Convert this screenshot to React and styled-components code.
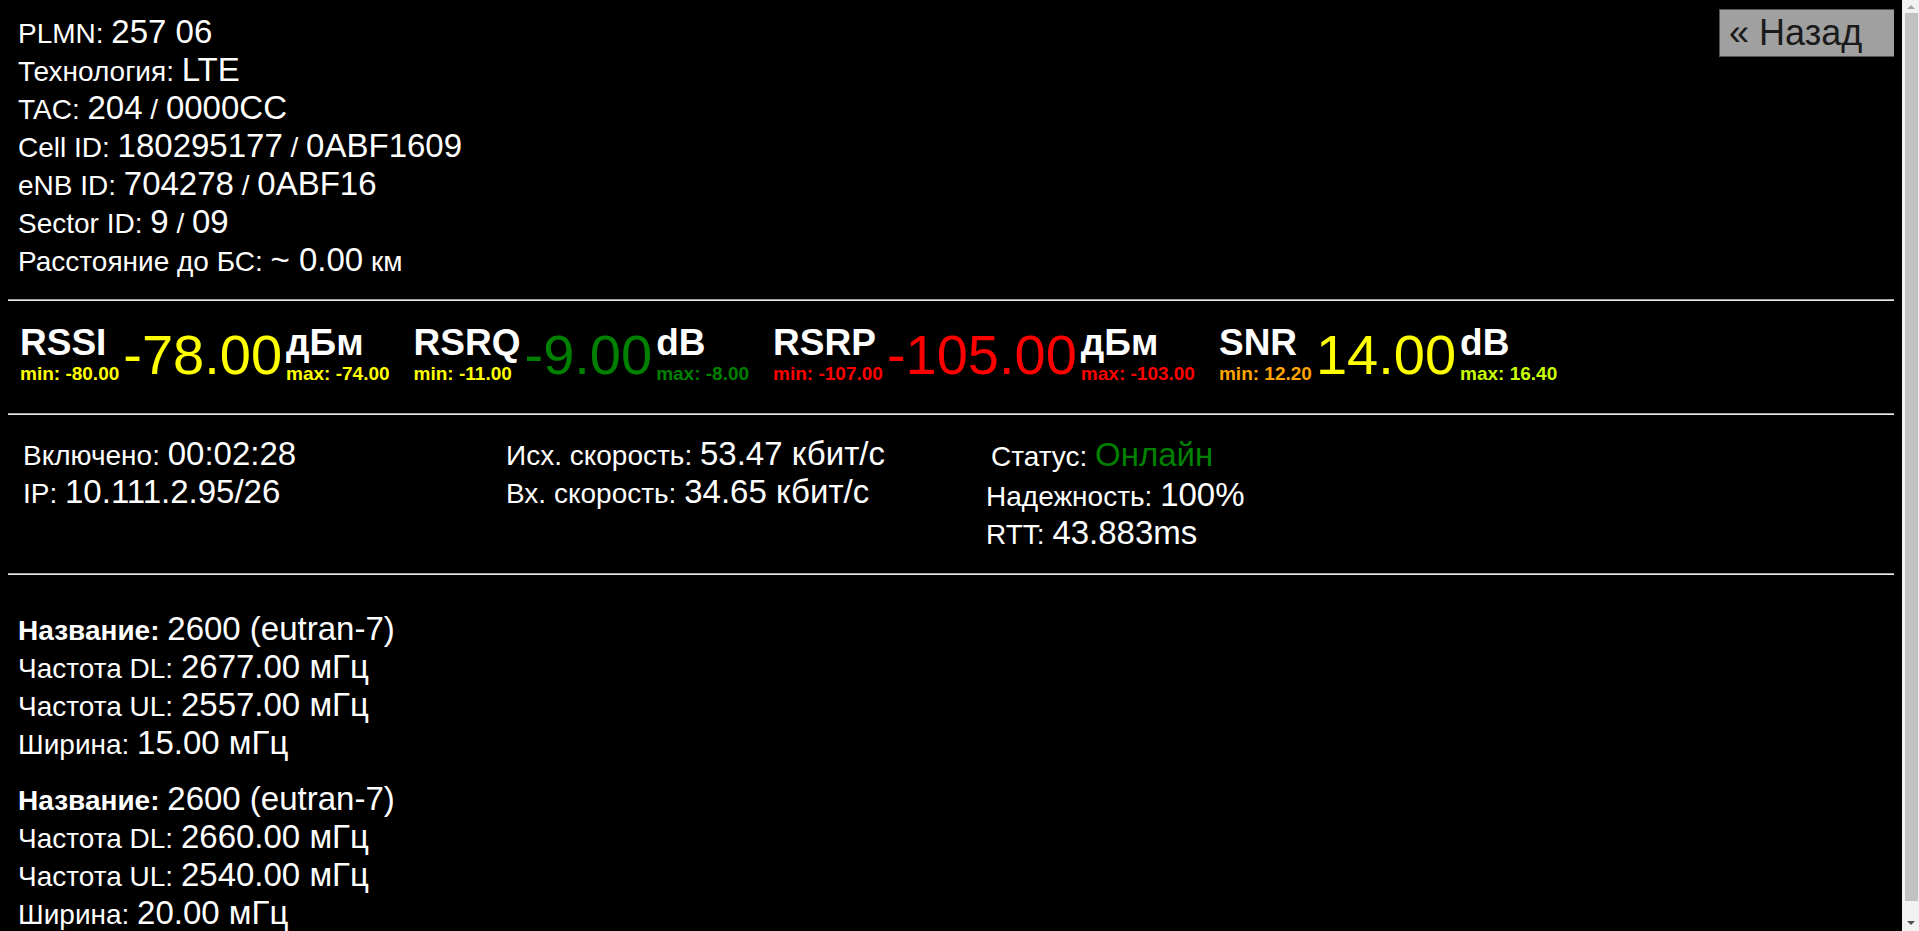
import React from "react";
import styled, { createGlobalStyle } from "styled-components";

const GlobalStyle = createGlobalStyle`
  html {
    background: #000;
  }
  body {
    margin: 8px 25px 8px 8px;
    background: #000;
    color: #fff;
    font-family: "Liberation Sans", Arial, sans-serif;
  }
`;

const metrics = [
  {
    name: "RSSI",
    value: "-78.00",
    unit: "дБм",
    min: "-80.00",
    max: "-74.00",
    color: "#ffff00",
    minColor: "#ffff00",
    maxColor: "#ffff00",
  },
  {
    name: "RSRQ",
    value: "-9.00",
    unit: "dB",
    min: "-11.00",
    max: "-8.00",
    color: "#008000",
    minColor: "#ffff00",
    maxColor: "#008000",
  },
  {
    name: "RSRP",
    value: "-105.00",
    unit: "дБм",
    min: "-107.00",
    max: "-103.00",
    color: "#ff0000",
    minColor: "#ff0000",
    maxColor: "#ff0000",
  },
  {
    name: "SNR",
    value: "14.00",
    unit: "dB",
    min: "12.20",
    max: "16.40",
    color: "#ffff00",
    minColor: "#ffa500",
    maxColor: "#c8ff00",
  },
];

const bands = [
  { name: "2600 (eutran-7)", dl: "2677.00 мГц", ul: "2557.00 мГц", width: "15.00 мГц" },
  { name: "2600 (eutran-7)", dl: "2660.00 мГц", ul: "2540.00 мГц", width: "20.00 мГц" },
];

const App = () => {
  return (
    <Page>
      <GlobalStyle />
      <TopSection>
        <InfoList>
          <Row>
            PLMN: <Value>257 06</Value>
          </Row>
          <Row>
            Технология: <Value>LTE</Value>
          </Row>
          <Row>
            TAC: <Value>204</Value> / <Value>0000CC</Value>
          </Row>
          <Row>
            Cell ID: <Value>180295177</Value> / <Value>0ABF1609</Value>
          </Row>
          <Row>
            eNB ID: <Value>704278</Value> / <Value>0ABF16</Value>
          </Row>
          <Row>
            Sector ID: <Value>9</Value> / <Value>09</Value>
          </Row>
          <Row>
            Расстояние до БС: <Value>~ 0.00</Value> км
          </Row>
        </InfoList>
        <BackButton>« Назад</BackButton>
      </TopSection>

      <Divider />

      <MetricsSection>
        {metrics.map((m) => (
          <Metric key={m.name}>
            <SideCol>
              <MetricName>{m.name}</MetricName>
              <Limit $color={m.minColor}>min: {m.min}</Limit>
            </SideCol>
            <BigValue $color={m.color}>{m.value}</BigValue>
            <SideCol>
              <MetricName>{m.unit}</MetricName>
              <Limit $color={m.maxColor}>max: {m.max}</Limit>
            </SideCol>
          </Metric>
        ))}
      </MetricsSection>

      <Divider />

      <StatusSection>
        <Column>
          <Row>
            Включено: <Value>00:02:28</Value>
          </Row>
          <Row>
            IP: <Value>10.111.2.95/26</Value>
          </Row>
        </Column>
        <Column>
          <Row>
            Исх. скорость: <Value>53.47 кбит/с</Value>
          </Row>
          <Row>
            Вх. скорость: <Value>34.65 кбит/с</Value>
          </Row>
        </Column>
        <Column>
          <StatusRow>
            Статус: <Value $color="#008000">Онлайн</Value>
          </StatusRow>
          <Row>
            Надежность: <Value>100%</Value>
          </Row>
          <Row>
            RTT: <Value>43.883ms</Value>
          </Row>
        </Column>
      </StatusSection>

      <Divider />

      <BandsSection>
        {bands.map((b, i) => (
          <Band key={i}>
            <Row>
              <b>Название:</b> <Value>{b.name}</Value>
            </Row>
            <Row>
              Частота DL: <Value>{b.dl}</Value>
            </Row>
            <Row>
              Частота UL: <Value>{b.ul}</Value>
            </Row>
            <Row>
              Ширина: <Value>{b.width}</Value>
            </Row>
          </Band>
        ))}
      </BandsSection>

      <Scrollbar>
        <ScrollArrow $dir="up" />
        <ScrollThumb />
        <ScrollArrow $dir="down" />
      </Scrollbar>
    </Page>
  );
};

export default App;

const Page = styled.div`
  font-size: 28px;
  line-height: 36px;
`;

const TopSection = styled.section`
  display: flex;
  justify-content: space-between;
  align-items: flex-start;
  padding: 6px 0 19px 10px;
`;

const InfoList = styled.div`
  display: flex;
  flex-direction: column;
`;

const Row = styled.div`
  height: 38px;
  white-space: nowrap;
`;

const StatusRow = styled(Row)`
  padding: 1px 0 0 5px;
  margin-bottom: 2px;
`;

const Value = styled.span`
  font-size: 33px;
  color: ${(p) => p.$color || "#fff"};
`;

const BackButton = styled.button`
  flex: none;
  width: 178px;
  height: 48px;
  margin: -5px -3px 0 0;
  padding: 0 0 0 9px;
  text-align: left;
  background: #a0a0a0;
  border: 1px solid #555;
  color: #1a1a1a;
  font-family: inherit;
  font-size: 36px;
  line-height: 1;
  cursor: pointer;
`;

const Divider = styled.hr`
  margin: 0;
  height: 0;
  border: none;
  border-top: 1px solid #a0a0a0;
  border-bottom: 1px solid #e6e6e6;
`;

const MetricsSection = styled.section`
  display: flex;
  align-items: flex-end;
  gap: 24px;
  padding: 23px 0 30px 12px;
`;

const Metric = styled.div`
  display: flex;
  align-items: flex-end;
  gap: 4px;
`;

const SideCol = styled.div`
  display: flex;
  flex-direction: column;
  align-items: flex-start;
`;

const MetricName = styled.div`
  font-size: 37px;
  font-weight: 700;
  line-height: 1;
`;

const Limit = styled.div`
  margin-top: 3px;
  font-size: 19px;
  font-weight: 700;
  line-height: 1;
  white-space: nowrap;
  color: ${(p) => p.$color};
`;

const BigValue = styled.div`
  font-size: 56px;
  line-height: 1;
  color: ${(p) => p.$color};
`;

const StatusSection = styled.section`
  display: grid;
  grid-template-columns: 483px 480px 1fr;
  padding: 21px 0 20px 15px;
`;

const Column = styled.div`
  display: flex;
  flex-direction: column;
`;

const BandsSection = styled.section`
  display: flex;
  flex-direction: column;
  gap: 18px;
  padding: 36px 0 12px 10px;
`;

const Band = styled.div`
  display: flex;
  flex-direction: column;
`;

/* the page is a little taller than the window: classic scrollbar on the right */
const Scrollbar = styled.div`
  position: fixed;
  top: 0;
  right: 0;
  width: 17px;
  height: 100vh;
  display: flex;
  flex-direction: column;
  align-items: center;
  background: #f1f1f1;
`;

const ScrollArrow = styled.div`
  flex: none;
  width: 17px;
  height: ${(p) => (p.$dir === "up" ? "13px" : "17px")};
  display: flex;
  align-items: center;
  justify-content: center;

  &::before {
    content: "";
    border-left: 4px solid transparent;
    border-right: 4px solid transparent;
    ${(p) =>
      p.$dir === "up"
        ? "border-bottom: 4px solid #a3a3a3;"
        : "border-top: 4px solid #505050;"}
  }
`;

const ScrollThumb = styled.div`
  flex: 1;
  width: 13px;
  margin: 0 0 13px 1px;
  background: #c1c1c1;
`;
